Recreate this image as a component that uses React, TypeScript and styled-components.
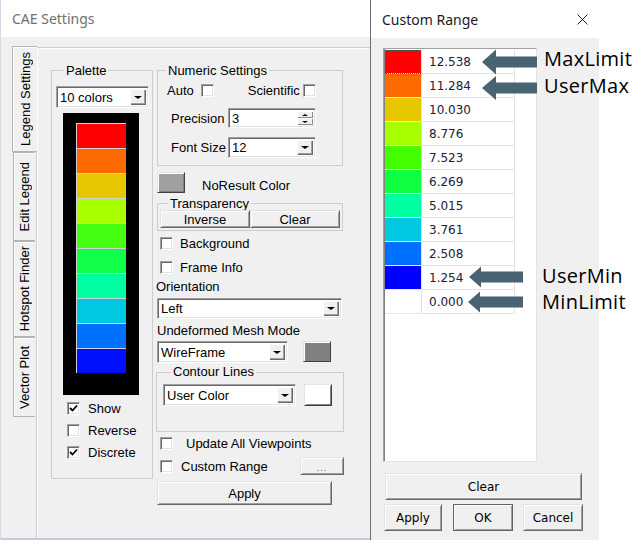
import React from 'react'
import styled, { createGlobalStyle } from 'styled-components'

const GlobalStyle = createGlobalStyle`
  html, body { margin: 0; padding: 0; background: #fff; }
  body {
    width: 641px;
    height: 553px;
    overflow: hidden;
    font-family: "Liberation Sans", Arial, sans-serif;
    font-size: 13px;
    color: #000;
  }
  * { box-sizing: border-box; }
`

const Page = styled.div`
  position: relative;
  display: flex;
  align-items: flex-start;
  width: 641px;
  height: 553px;
`

/* ---------- left dialog ---------- */

const LeftDialog = styled.div`
  width: 370px;
  height: 540px;
  display: flex;
  flex-direction: column;
  border-left: 1px solid #d4d8e6;
`

const TitleBar = styled.div<{ $h: number; $pl: number; $color: string }>`
  height: ${p => p.$h}px;
  padding-left: ${p => p.$pl}px;
  display: flex;
  align-items: center;
  justify-content: space-between;
  font-family: "Noto Sans", "Open Sans", sans-serif;
  font-size: 14px;
  color: ${p => p.$color};
  background: #fff;
`

const DialogBody = styled.div`
  flex: 1;
  display: flex;
  background: #f0f0f0;
  padding: 10px 0 0 11px;
  border-bottom: 2px solid #c6cade;
`

const TabStrip = styled.div`
  width: 24px;
  display: flex;
  flex-direction: column;
  padding-top: 1px;
  position: relative;
  z-index: 1;
`

const Tab = styled.div<{ $h: number; $active?: boolean }>`
  height: ${p => p.$h}px;
  width: ${p => (p.$active ? 25 : 22)}px;
  margin-left: ${p => (p.$active ? 0 : 1)}px;
  display: flex;
  align-items: center;
  justify-content: center;
  background: #f0f0f0;
  border: 1px solid #b4b4b4;
  border-right: none;
  box-shadow: inset 1px 1px 0 #fff;
  margin-top: ${p => (p.$active ? -2 : 0)}px;
`

const TabLabel = styled.span`
  writing-mode: vertical-rl;
  transform: rotate(180deg);
  white-space: nowrap;
`

const Panel = styled.div`
  flex: 1;
  border-top: 1px solid #cfcfcf;
  border-left: 1px solid #cfcfcf;
  box-shadow: inset 1px 1px 0 #fff;
  padding: 15px 0 0 14px;
  display: grid;
  grid-template-columns: 102px 187px;
  column-gap: 4px;
  align-items: start;
`

const Group = styled.fieldset<{ $w: number; $h: number; $pt?: number; $pl?: number; $ml?: number; $mt?: number }>`
  width: ${p => p.$w}px;
  height: ${p => p.$h}px;
  margin: ${p => p.$mt ?? 0}px 0 0 ${p => p.$ml ?? 0}px;
  padding: ${p => p.$pt ?? 0}px 0 0 ${p => p.$pl ?? 0}px;
  border: 1px solid #cdcdcd;
  min-inline-size: 0;
`

const Legend = styled.legend<{ $lh?: number }>`
  margin-left: 8px;
  padding: 0 2px;
  line-height: ${p => p.$lh ?? 15}px;
`

const PaletteBar = styled.div`
  width: 76px;
  height: 282px;
  margin: 5px 0 0 7px;
  padding: 10px 13px;
  background: #000;
`

const Swatch = styled.div<{ $c: string }>`
  height: 25px;
  background: ${p => p.$c};
  border-top: 1px solid #d2d2d2;
  border-left: 1px solid #d2d2d2;
`

const Column = styled.div`
  display: flex;
  flex-direction: column;
`

const Row = styled.div<{ $h?: number; $mt?: number; $pl?: number; $gap?: number; $align?: string }>`
  display: flex;
  align-items: ${p => p.$align ?? 'center'};
  height: ${p => (p.$h ? `${p.$h}px` : 'auto')};
  margin-top: ${p => p.$mt ?? 0}px;
  padding-left: ${p => p.$pl ?? 0}px;
  gap: ${p => p.$gap ?? 0}px;
  white-space: nowrap;
`

const FieldLabel = styled.span<{ $w?: number; $mt?: number; $ml?: number }>`
  display: block;
  width: ${p => (p.$w ? `${p.$w}px` : 'auto')};
  margin-top: ${p => p.$mt ?? 0}px;
  margin-left: ${p => p.$ml ?? 0}px;
  line-height: 15px;
  white-space: nowrap;
`

const Box = styled.span<{ $ml?: number }>`
  flex: none;
  width: 13px;
  height: 13px;
  margin-left: ${p => p.$ml ?? 0}px;
  display: inline-flex;
  align-items: center;
  justify-content: center;
  background: #fff;
  border: 1px solid;
  border-color: #a0a0a0 #fff #fff #a0a0a0;
  box-shadow: inset 1px 1px 0 #696969, inset -1px -1px 0 #e3e3e3;
`

const Checkbox: React.FC<{ checked?: boolean; ml?: number }> = ({ checked, ml }) => (
  <Box $ml={ml}>
    {checked && (
      <svg width="9" height="9" viewBox="0 0 9 9">
        <path d="M1 4 L3.5 6.5 L8 1.5" fill="none" stroke="#000" strokeWidth="1.8" />
      </svg>
    )}
  </Box>
)

const SelectBox = styled.div<{ $w: number; $h: number; $ml?: number }>`
  flex: none;
  display: flex;
  width: ${p => p.$w}px;
  height: ${p => p.$h}px;
  margin-left: ${p => p.$ml ?? 0}px;
  padding: 2px;
  background: #fff;
  border: 1px solid;
  border-color: #a0a0a0 #fff #fff #a0a0a0;
  box-shadow: inset 1px 1px 0 #696969, inset -1px -1px 0 #e3e3e3;
`

const SelectText = styled.span`
  flex: 1;
  align-self: center;
  padding-left: 1px;
  white-space: nowrap;
  overflow: hidden;
`

const ArrowButton = styled.span`
  width: 16px;
  display: flex;
  align-items: center;
  justify-content: center;
  background: #f0f0f0;
  box-shadow: inset 1px 1px 0 #fff, inset -1px -1px 0 #696969, inset -2px -2px 0 #a0a0a0;
`

const Triangle = styled.span<{ $up?: boolean; $size?: number }>`
  width: 0;
  height: 0;
  border-left: ${p => p.$size ?? 4}px solid transparent;
  border-right: ${p => p.$size ?? 4}px solid transparent;
  ${p => (p.$up ? 'border-bottom' : 'border-top')}: ${p => (p.$size ?? 4) - 0.5}px solid #000;
`

const Select: React.FC<{ value: string; w: number; h: number; ml?: number }> = ({ value, w, h, ml }) => (
  <SelectBox $w={w} $h={h} $ml={ml}>
    <SelectText>{value}</SelectText>
    <ArrowButton>
      <Triangle />
    </ArrowButton>
  </SelectBox>
)

const Spinner = styled.span`
  width: 16px;
  display: flex;
  flex-direction: column;
`

const SpinHalf = styled.span`
  flex: 1;
  display: flex;
  align-items: center;
  justify-content: center;
  background: #f0f0f0;
  box-shadow: inset 1px 1px 0 #fff, inset -1px -1px 0 #8a8a8a;
`

const Button = styled.button<{ $w: number; $h: number; $ml?: number; $default?: boolean; $font?: string }>`
  flex: none;
  width: ${p => p.$w}px;
  height: ${p => p.$h}px;
  margin: 0 0 0 ${p => p.$ml ?? 0}px;
  padding: 0;
  font-family: ${p => p.$font ?? '"Liberation Sans", Arial, sans-serif'};
  font-size: ${p => (p.$font ? 12 : 13)}px;
  color: #000;
  background: #f0f0f0;
  border: 1px solid;
  border-color: ${p => (p.$default ? '#646464' : '#e3e3e3 #696969 #696969 #e3e3e3')};
  box-shadow: inset 1px 1px 0 #fff, inset -1px -1px 0 #a0a0a0;
  line-height: 1;
`

const ColorButton = styled.span<{ $c: string; $w: number; $h: number; $ml?: number }>`
  flex: none;
  width: ${p => p.$w}px;
  height: ${p => p.$h}px;
  margin-left: ${p => p.$ml ?? 0}px;
  background: ${p => p.$c};
  border: 1px solid;
  border-color: #e3e3e3 #404040 #404040 #e3e3e3;
  box-shadow: inset 1px 1px 0 #fff, inset -1px -1px 0 #808080;
`

const Dots = styled.span`
  font-size: 9px;
  color: #555;
  letter-spacing: 1px;
`

/* ---------- right dialog ---------- */

const RightDialog = styled.div`
  width: 229px;
  height: 540px;
  display: flex;
  flex-direction: column;
  border-left: 1px solid #6d6d6d;
  font-family: "DejaVu Sans", Tahoma, sans-serif;
  font-size: 12px;
`

const CloseIcon = styled.svg`
  margin-right: 11px;
`

const RightBody = styled.div`
  flex: 1;
  background: #f0f0f0;
  padding: 10px 0 0 12px;
  display: flex;
  flex-direction: column;
`

const ListBox = styled.div`
  width: 154px;
  height: 414px;
  padding: 1px 0 0 1px;
  background: #fff;
  border: 1px solid;
  border-color: #a0a0a0 #e3e3e3 #e3e3e3 #a0a0a0;
  box-shadow: inset 1px 0 0 #828282;
  display: grid;
  grid-template-columns: 36px 94px;
  grid-auto-rows: 24px;
  align-content: start;
`

const ColorCell = styled.div<{ $c: string; $focus?: boolean }>`
  background: ${p => p.$c};
  border-bottom: 1px solid #e8e8e8;
  ${p => (p.$focus ? 'outline: 1px dotted #555; outline-offset: -1px;' : '')}
`

const ValueCell = styled.div`
  display: flex;
  align-items: center;
  padding-left: 7px;
  color: #20203a;
  border-right: 1px solid #e3e3e3;
  border-bottom: 1px solid #e3e3e3;
  border-left: 1px solid #e3e3e3;
`

const ButtonRow = styled.div<{ $mt: number; $ml: number }>`
  display: flex;
  margin-top: ${p => p.$mt}px;
  margin-left: ${p => p.$ml}px;
`

/* ---------- annotations ---------- */

const Overlay = styled.div`
  position: absolute;
  inset: 0;
  pointer-events: none;
`

const Note = styled.span<{ $x: number; $y: number }>`
  position: absolute;
  left: ${p => p.$x}px;
  top: ${p => p.$y}px;
  font-family: "Open Sans", "Noto Sans", sans-serif;
  font-size: 20px;
  line-height: 24px;
  letter-spacing: 0.3px;
  color: #000;
`

const arrow = (tipX: number, tipY: number, endX: number, headLen: number, headH: number, shaftH: number) => {
  const bx = tipX + headLen
  return [
    [tipX, tipY],
    [bx, tipY - headH / 2],
    [bx, tipY - shaftH / 2],
    [endX, tipY - shaftH / 2],
    [endX, tipY + shaftH / 2],
    [bx, tipY + shaftH / 2],
    [bx, tipY + headH / 2],
  ]
    .map(pt => pt.join(','))
    .join(' ')
}

const paletteColors = [
  '#ff0000', '#ff6a00', '#e6c800', '#a8ff00', '#44ff10',
  '#10ff48', '#00ffa0', '#00c8e0', '#0070ff', '#0010ff',
]

const rangeRows = [
  { c: '#ff0000', v: '12.538' },
  { c: '#ff6a00', v: '11.284' },
  { c: '#e6c800', v: '10.030' },
  { c: '#a8ff00', v: '8.776' },
  { c: '#44ff00', v: '7.523' },
  { c: '#10ff40', v: '6.269' },
  { c: '#00ffa0', v: '5.015' },
  { c: '#00c8e0', v: '3.761' },
  { c: '#0070ff', v: '2.508' },
  { c: '#0000ff', v: '1.254' },
  { c: '#ffffff', v: '0.000' },
]

const tahoma = '"DejaVu Sans", Tahoma, sans-serif'

const App: React.FC = () => {
  return (
    <Page>
      <GlobalStyle />
      <LeftDialog>
        <TitleBar $h={37} $pl={11} $color="#707070">CAE Settings</TitleBar>
        <DialogBody>
          <TabStrip>
            <Tab $h={106} $active><TabLabel>Legend Settings</TabLabel></Tab>
            <Tab $h={89}><TabLabel>Edit Legend</TabLabel></Tab>
            <Tab $h={96}><TabLabel>Hotspot Finder</TabLabel></Tab>
            <Tab $h={80}><TabLabel>Vector Plot</TabLabel></Tab>
          </TabStrip>
          <Panel>
            <Group $w={102} $h={416} $pt={8} $pl={4}>
              <Legend>Palette</Legend>
              <Select value="10 colors" w={93} h={22} />
              <PaletteBar>
                {paletteColors.map(c => (
                  <Swatch key={c} $c={c} />
                ))}
              </PaletteBar>
              <Row $h={22} $mt={2} $pl={11} $gap={8}><Checkbox checked />Show</Row>
              <Row $h={22} $pl={11} $gap={8}><Checkbox />Reverse</Row>
              <Row $h={22} $pl={11} $gap={8}><Checkbox checked />Discrete</Row>
            </Group>

            <Column>
              <Group $w={186} $h={103} $pt={4}>
                <Legend>Numeric Settings</Legend>
                <Row $h={16} $pl={9} $gap={7}>
                  Auto <Checkbox />
                  <FieldLabel $ml={27}>Scientific</FieldLabel>
                  <Checkbox ml={-4} />
                </Row>
                <Row $h={20} $mt={10} $pl={13}>
                  <FieldLabel $w={57}>Precision</FieldLabel>
                  <SelectBox $w={88} $h={20}>
                    <SelectText>3</SelectText>
                    <Spinner>
                      <SpinHalf><Triangle $up $size={3} /></SpinHalf>
                      <SpinHalf><Triangle $size={3} /></SpinHalf>
                    </Spinner>
                  </SelectBox>
                </Row>
                <Row $h={21} $mt={9} $pl={13}>
                  <FieldLabel $w={57}>Font Size</FieldLabel>
                  <Select value="12" w={88} h={21} />
                </Row>
              </Group>

              <Row $h={21} $mt={6} $gap={17} $align="flex-end">
                <ColorButton $c="#a0a0a0" $w={28} $h={21} />
                <FieldLabel>NoResult Color</FieldLabel>
              </Row>

              <Group $w={186} $h={34} $mt={4} $pl={2}>
                <Legend $lh={13}>Transparency</Legend>
                <Row $h={18}>
                  <Button $w={90} $h={18}>Inverse</Button>
                  <Button $w={90} $h={18}>Clear</Button>
                </Row>
              </Group>

              <Row $h={24} $pl={3} $gap={7}><Checkbox />Background</Row>
              <Row $h={24} $pl={3} $gap={7}><Checkbox />Frame Info</Row>
              <FieldLabel $ml={-1}>Orientation</FieldLabel>
              <Row $mt={4}><Select value="Left" w={185} h={21} /></Row>
              <FieldLabel $mt={4}>Undeformed Mesh Mode</FieldLabel>
              <Row $mt={3} $align="flex-start">
                <Select value="WireFrame" w={131} h={22} />
                <ColorButton $c="#808080" $w={28} $h={21} $ml={15} />
              </Row>

              <Group $w={188} $h={67} $mt={2} $ml={-1} $pt={5} $pl={6}>
                <Legend $lh={14}>Contour Lines</Legend>
                <Row>
                  <Select value="User Color" w={133} h={22} />
                  <ColorButton $c="#ffffff" $w={28} $h={22} $ml={8} />
                </Row>
              </Group>

              <Row $h={18} $mt={2} $pl={3} $gap={13}><Checkbox />Update All Viewpoints</Row>
              <Row $h={18} $mt={5} $pl={3} $gap={8}>
                <Checkbox />Custom Range
                <Button $w={44} $h={18} style={{ marginLeft: 'auto' }}><Dots>...</Dots></Button>
              </Row>
              <Row $mt={6}><Button $w={175} $h={24}>Apply</Button></Row>
            </Column>
          </Panel>
        </DialogBody>
      </LeftDialog>

      <RightDialog>
        <TitleBar $h={38} $pl={11} $color="#1a1a1a">
          Custom Range
          <CloseIcon width="11" height="11" viewBox="0 0 11 11">
            <path d="M0.5 0.5 L10.5 10.5 M10.5 0.5 L0.5 10.5" stroke="#222" strokeWidth="1" />
          </CloseIcon>
        </TitleBar>
        <RightBody>
          <ListBox>
            {rangeRows.map((r, i) => (
              <React.Fragment key={r.v}>
                <ColorCell $c={r.c} $focus={i === 0} />
                <ValueCell>{r.v}</ValueCell>
              </React.Fragment>
            ))}
          </ListBox>
          <ButtonRow $mt={11} $ml={2}>
            <Button $w={197} $h={27} $font={tahoma}>Clear</Button>
          </ButtonRow>
          <ButtonRow $mt={4} $ml={1}>
            <Button $w={58} $h={27} $font={tahoma}>Apply</Button>
            <Button $w={60} $h={27} $ml={11} $default $font={tahoma}>OK</Button>
            <Button $w={60} $h={27} $ml={10} $font={tahoma}>Cancel</Button>
          </ButtonRow>
        </RightBody>
      </RightDialog>

      <Overlay>
        <svg width="641" height="553" viewBox="0 0 641 553">
          <g fill="#4a6372">
            <polygon points={arrow(482, 62, 537, 14, 25, 11)} />
            <polygon points={arrow(482, 88, 537, 14, 24, 11)} />
            <polygon points={arrow(469, 277, 523, 12, 21, 11)} />
            <polygon points={arrow(468, 302, 523, 12, 21, 11)} />
          </g>
        </svg>
        <Note $x={544} $y={47}>MaxLimit</Note>
        <Note $x={544} $y={74}>UserMax</Note>
        <Note $x={542} $y={264}>UserMin</Note>
        <Note $x={542} $y={290}>MinLimit</Note>
      </Overlay>
    </Page>
  )
}

export default App
